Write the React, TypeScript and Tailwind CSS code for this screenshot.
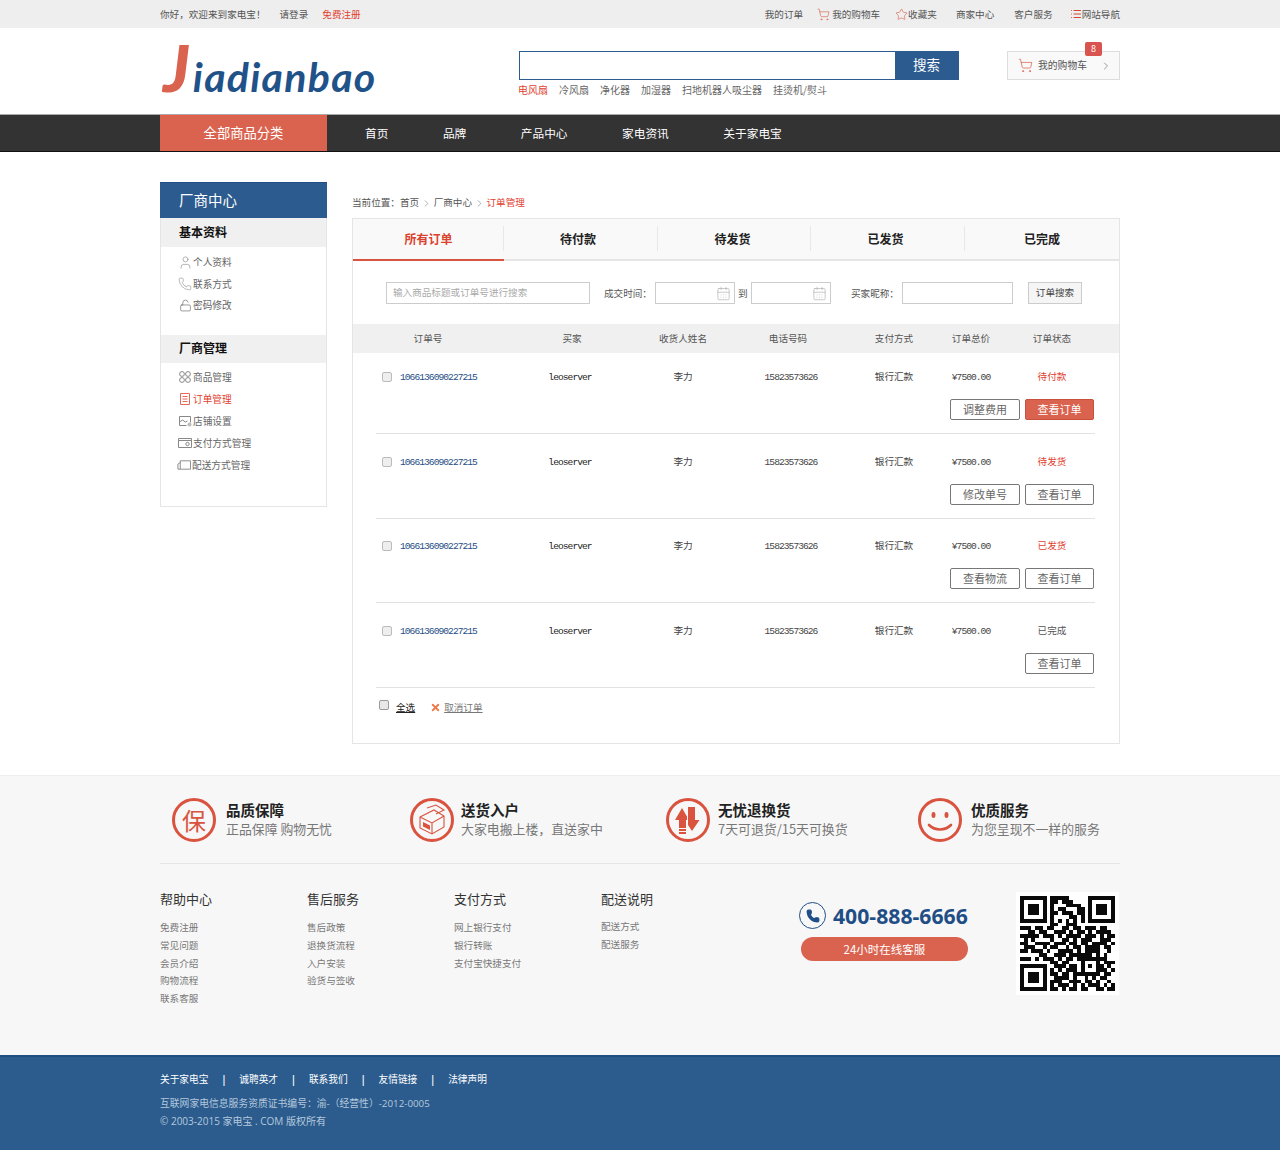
import { CalendarDays, ChevronRight, List, LockOpen, Phone, ShoppingCart, Star, User, X } from 'lucide-react';
import type { ReactNode } from 'react';

const qrRows = [
  '1111111011111000001111111',
  '1000001011011100001000001',
  '1011101010001111001011101',
  '1011101010110001101011101',
  '1011101011011101101011101',
  '1000001010000110101000001',
  '1111111010101010101111111',
  '0000000011001110000000000',
  '1110110110011011011101100',
  '0011011001110101101011110',
  '1111101110101111011101011',
  '0101000010011010111001110',
  '1100111101110110110111101',
  '0111001011001011011110110',
  '1101110100111101011110010',
  '0000011001110111111010100',
  '1110101110101101111111100',
  '0000000011011000100010111',
  '1111111001110110101011010',
  '1000001010101110100011101',
  '1011101011011011111110110',
  '1011101001111010010101100',
  '1011101011100111011010010',
  '1000001010111010101110101',
  '1111111011010110110011011',
];

const QrCode = () => (
  <div className="h-[103px] w-[103px] bg-white p-[4px]">
    <svg viewBox="0 0 25 25" width="95" height="95" shapeRendering="crispEdges">
      {qrRows.map((row, y) =>
        row.split('').map((cell, x) => (cell === '1' ? <rect key={`${x}-${y}`} x={x} y={y} width="1" height="1" fill="#0a0a0a" /> : null)),
      )}
    </svg>
  </div>
);

const TopBar = () => (
  <div className="h-[28px] bg-[#eeeeee] text-[9.6px] leading-[28px] text-[#555]">
    <div className="mx-auto flex w-[960px]">
      <span>你好，欢迎来到家电宝！</span>
      <span className="ml-[14px]">请登录</span>
      <span className="ml-[14px] text-[#e2412f]">免费注册</span>
      <div className="ml-auto flex items-center">
        <span>我的订单</span>
        <ShoppingCart size={13} strokeWidth={1.2} className="ml-[14px] mr-[2px] text-[#d9634f]" />
        <span>我的购物车</span>
        <Star size={13} strokeWidth={1.2} className="ml-[15px] text-[#d9634f]" />
        <span>收藏夹</span>
        <span className="ml-[19px]">商家中心</span>
        <span className="ml-[20px]">客户服务</span>
        <List size={12} strokeWidth={2} className="ml-[17px] text-[#d9432f]" />
        <span>网站导航</span>
      </div>
    </div>
  </div>
);

const hotWords = ['冷风扇', '净化器', '加湿器', '扫地机器人吸尘器', '挂烫机/熨斗'];

const Header = () => (
  <div className="mx-auto flex h-[86px] w-[960px]">
    <div className="flex w-[359px] items-baseline pl-[3px] pt-[7px] font-['Lato',sans-serif] italic leading-none">
      <span className="text-[65px] font-black text-[#d9634f]">J</span>
      <span className="ml-[3px] text-[41px] font-bold tracking-[1.3px] text-[#1f5288]">iadianbao</span>
    </div>
    <div className="w-[440px] pt-[23px]">
      <div className="flex h-[29px] border border-[#2c5c8f]">
        <input className="min-w-0 flex-1 bg-white outline-none" readOnly />
        <button className="w-[63px] bg-[#2c5c8f] pb-[2px] text-[13.5px] text-white">搜索</button>
      </div>
      <div className="mt-[3px] flex gap-[11px] text-[10px] leading-[14px] text-[#666]">
        <span className="-ml-px text-[#e2412f]">电风扇</span>
        {hotWords.map((word) => (
          <span key={word}>{word}</span>
        ))}
      </div>
    </div>
    <div className="relative ml-[48px] mt-[23px] flex h-[29px] w-[113px] items-center border border-[#dddddd] bg-[#f9f9f9] pl-[10px] text-[9.8px] text-[#555]">
      <ShoppingCart size={15} strokeWidth={1.2} className="text-[#d9634f]" />
      <span className="ml-[5px]">我的购物车</span>
      <ChevronRight size={12} strokeWidth={1.2} className="ml-[13px] text-[#555]" />
      <span className="absolute -top-[10px] left-[77px] h-[14px] w-[17px] rounded-[2px] bg-[#d9534f] text-center text-[9px] leading-[14px] text-white">8</span>
    </div>
  </div>
);

const navItems = ['首页', '品牌', '产品中心', '家电资讯', '关于家电宝'];

const Nav = () => (
  <div className="h-[38px] border-t border-b border-t-[#aaaaaa] border-b-[#111] bg-[#333333]">
    <div className="mx-auto flex w-[960px] text-white">
      <div className="h-[36px] w-[167px] border-t border-[#ee5a45] bg-[#d9634f] text-center text-[13.3px] leading-[34px]">全部商品分类</div>
      <div className="ml-[38px] flex gap-[54.5px] text-[11.7px] leading-[35px]">
        {navItems.map((item) => (
          <span key={item}>{item}</span>
        ))}
      </div>
    </div>
  </div>
);

const gray = '#888888';

const FourCircles = () => (
  <svg width="12" height="12" viewBox="0 0 12 12" fill="none" stroke={gray}>
    <circle cx="3" cy="3" r="2.4" />
    <circle cx="9" cy="3" r="2.4" />
    <circle cx="3" cy="9" r="2.4" />
    <circle cx="9" cy="9" r="2.4" />
  </svg>
);

const OrderIcon = () => (
  <svg width="12" height="12" viewBox="0 0 12 12" fill="none" stroke="#e8695a">
    <path d="M1.5 .5h9v11h-9zM3.5 3.5h5M3.5 6h5M3.5 8.5h5" />
  </svg>
);

const ShopIcon = () => (
  <svg width="13" height="12" viewBox="0 0 13 12" fill="none" stroke={gray}>
    <path d="M.5 1.5h11v6M.5 1.5v9h7M.5 7l3-2 3 2 2-1" />
    <circle cx="10.5" cy="9.5" r="2" fill="#bbb" stroke="none" />
  </svg>
);

const PayIcon = () => (
  <svg width="14" height="12" viewBox="0 0 14 12" fill="none" stroke={gray}>
    <path d="M.5 1.5h13v9H.5zM.5 3.5h13" />
    <circle cx="9.5" cy="7" r="1.7" />
  </svg>
);

const ShipIcon = () => (
  <svg width="15" height="12" viewBox="0 0 15 12" fill="none" stroke={gray}>
    <path d="M3.5 1.5h11v9h-11zM3.5 3.5L1 5v5.5h2.5" />
  </svg>
);

const sideIcon = (icon: ReactNode) => <span className="flex h-[14px] w-[14px] shrink-0 items-center justify-center">{icon}</span>;

const SideItem = ({ icon, label, active, className }: { icon: ReactNode; label: string; active?: boolean; className: string }) => (
  <div className={`flex items-center gap-px text-[9.7px] leading-[14px] ${active ? 'text-[#e2412f]' : 'text-[#666]'} ${className}`}>
    {sideIcon(icon)}
    <span>{label}</span>
  </div>
);

const Sidebar = () => (
  <aside className="h-[325px] w-[167px] shrink-0 border-x border-b border-[#e5e5e5] bg-white">
    <div className="-mx-px h-[36px] border-t border-[#1f4e86] bg-[#2c5c8f] pl-[19px] text-[14.5px] leading-[33px] text-white">厂商中心</div>
    <div className="h-[29px] bg-[#f0f0f0] pl-[18px] text-[12px] font-bold leading-[28px] text-[#111]">基本资料</div>
    <SideItem className="ml-[17px] mt-[8px]" label="个人资料" icon={<User size={15} strokeWidth={1} color={gray} className="shrink-0" />} />
    <SideItem className="ml-[17px] mt-[8px]" label="联系方式" icon={<Phone size={14} strokeWidth={1} color={gray} className="shrink-0" />} />
    <SideItem className="ml-[17px] mt-[7px]" label="密码修改" icon={<LockOpen size={13} strokeWidth={1.2} color="#666" className="shrink-0" />} />
    <div className="mt-[23px] h-[28px] bg-[#f0f0f0] pl-[18px] text-[12px] font-bold leading-[26px] text-[#111]">厂商管理</div>
    <SideItem className="ml-[17px] mt-[7px]" label="商品管理" icon={<FourCircles />} />
    <SideItem className="ml-[17px] mt-[8px]" label="订单管理" icon={<OrderIcon />} active />
    <SideItem className="ml-[17px] mt-[8px]" label="店铺设置" icon={<ShopIcon />} />
    <SideItem className="ml-[17px] mt-[8px]" label="支付方式管理" icon={<PayIcon />} />
    <SideItem className="ml-[16px] mt-[8px]" label="配送方式管理" icon={<ShipIcon />} />
  </aside>
);

const tabs = [
  { label: '所有订单', width: 'w-[151px]', nudge: '' },
  { label: '待付款', width: 'w-[154px]', nudge: 'pr-[6px]' },
  { label: '待发货', width: 'w-[153px]', nudge: 'pr-[4px]' },
  { label: '已发货', width: 'w-[154px]', nudge: 'pr-[5px]' },
  { label: '已完成', width: 'w-[154px]', nudge: '' },
];

const Tabs = () => (
  <div className="flex h-[42px] border-b-2 border-[#e5e5e5] bg-[#f9f9f9] text-[12px] font-bold text-[#222]">
    {tabs.map((tab, index) => (
      <div key={tab.label} className={`relative flex items-center justify-center ${tab.width} ${tab.nudge} ${index === 0 ? 'text-[#d9432f]' : ''}`}>
        {tab.label}
        {index === 0 && <span className="absolute -bottom-[2px] left-0 h-[2px] w-full bg-[#d9543f]" />}
        {index < 4 && <span className="absolute right-0 top-[7px] h-[25px] w-px bg-[#e8e8e8]" />}
      </div>
    ))}
  </div>
);

const DateInput = () => (
  <div className="flex h-[22px] w-[80px] items-center justify-end border border-[#cccccc] pr-[3px]">
    <CalendarDays size={15} strokeWidth={1} color="#aaa" />
  </div>
);

const Filters = () => (
  <div className="flex h-[63px] items-center pl-[33px] pt-[1px] text-[9.6px] text-[#555]">
    <input
      readOnly
      placeholder="输入商品标题或订单号进行搜索"
      className="h-[22px] w-[204px] border border-[#cccccc] px-[6px] pb-[2px] placeholder:text-[#aaa]"
    />
    <span className="ml-[14px] mr-[5px] w-[46px] whitespace-nowrap">成交时间：</span>
    <DateInput />
    <span className="mx-[3px] w-[10px]">到</span>
    <DateInput />
    <span className="ml-[20px] mr-[5px] w-[46px] whitespace-nowrap">买家昵称：</span>
    <input readOnly className="h-[22px] w-[111px] border border-[#cccccc]" />
    <button className="ml-[15px] h-[22px] w-[54px] border border-[#cccccc] bg-[#f5f5f5] pb-[1px] text-[9.6px] text-[#444]">订单搜索</button>
  </div>
);

const headers = ['订单号', '买家', '收货人姓名', '电话号码', '支付方式', '订单总价', '订单状态'];

const TableHeader = () => (
  <div className="grid h-[29px] grid-cols-[150px_138px_84px_126px_86px_68px_94px] bg-[#f0f0f0] text-center text-[9.6px] leading-[29px] text-[#555]">
    {headers.map((title) => (
      <span key={title}>{title}</span>
    ))}
  </div>
);

const orders = [
  { pad: 'pt-[16px]', status: '待付款', statusClass: 'text-[#e2412f]', extra: '调整费用', primary: true },
  { pad: 'pt-[20px]', status: '待发货', statusClass: 'text-[#e2412f]', extra: '修改单号', primary: false },
  { pad: 'pt-[19px]', status: '已发货', statusClass: 'text-[#e2412f]', extra: '查看物流', primary: false },
  { pad: 'pt-[20px]', status: '已完成', statusClass: 'text-[#555]', extra: '', primary: false },
];

const mono = "translate-y-px font-['Liberation_Mono',monospace] text-[9.6px] tracking-[-0.95px]";

const OrderButton = ({ label, primary, width }: { label: string; primary?: boolean; width: string }) => (
  <button
    className={`h-[21px] rounded-[2px] border text-[11px] leading-none ${width} ${
      primary ? 'border-[#c9503d] bg-[#d9634f] text-white' : 'border-[#777] bg-white text-[#666]'
    }`}
  >
    {label}
  </button>
);

const OrderRow = ({ order }: { order: (typeof orders)[number] }) => (
  <div className={`ml-[23px] mr-[24px] border-b border-[#e2e2e2] pb-[13px] ${order.pad}`}>
    <div className="grid h-[16px] grid-cols-[127px_138px_84px_126px_86px_68px_90px] items-center text-center text-[9.6px] text-[#444]">
      <div className="flex items-center pl-[6px] text-left">
        <input type="checkbox" className="h-[10px] w-[10px] appearance-none rounded-[2px] border border-[#bbb] bg-[#eee]" />
        <span className={`ml-[8px] text-[#1f4e86] ${mono}`}>1066136090227215</span>
      </div>
      <span className={`-ml-[4px] text-[#222] ${mono}`}>leoserver</span>
      <span className="-translate-y-px">李力</span>
      <span className={`pl-[6px] ${mono}`}>15823573626</span>
      <span className="-translate-y-px">银行汇款</span>
      <span className={mono}>¥7500.00</span>
      <span className={`-translate-y-px pl-[4px] ${order.statusClass}`}>{order.status}</span>
    </div>
    <div className="mt-[14px] flex justify-end gap-[5px] pr-[1px]">
      {order.extra && <OrderButton label={order.extra} width="w-[70px]" />}
      <OrderButton label="查看订单" primary={order.primary} width="w-[69px]" />
    </div>
  </div>
);

const Crumb = () => (
  <span className="inline-flex w-[14.5px] justify-center align-middle">
    <ChevronRight size={11} strokeWidth={1} color="#555" />
  </span>
);

const Main = () => (
  <main className="flex-1">
    <div className="h-[36px] pt-[12px] text-[9.6px] leading-[16px] text-[#555]">
      当前位置：首页
      <Crumb />
      厂商中心
      <Crumb />
      <span className="text-[#e2412f]">订单管理</span>
    </div>
    <div className="h-[526px] border border-[#e5e5e5] bg-white">
      <Tabs />
      <Filters />
      <TableHeader />
      {orders.map((order) => (
        <OrderRow key={order.status} order={order} />
      ))}
      <div className="flex items-center pl-[26px] pt-[12px] text-[9.6px]">
        <input type="checkbox" className="-mt-[4px] h-[10px] w-[10px] appearance-none rounded-[2px] border border-[#999] bg-[#e8e8e8]" />
        <span className="ml-[7px] text-[#222] underline">全选</span>
        <X size={11} strokeWidth={4} className="ml-[15px] text-[#ee7a4a]" />
        <span className="ml-[3px] text-[#777] underline">取消订单</span>
      </div>
    </div>
  </main>
);

const red = '#d9533f';

const BoxIcon = () => (
  <svg width="44" height="44" viewBox="0 0 44 44" fill="none" stroke={red}>
    <circle cx="22" cy="22" r="20.5" strokeWidth="3" />
    <path d="M10 19l14-7 10 6v11l-12 7-12-6zM10 19l12 6 12-7M22 25v11M17 10l9-3 8 5-8 4" strokeWidth="1.1" />
    <path d="M13 24l7 3.5v4.5l-7-3.5z" fill={red} stroke="none" />
  </svg>
);

const ArrowsIcon = () => (
  <svg width="44" height="44" viewBox="0 0 44 44" fill="none">
    <circle cx="22" cy="22" r="20.5" stroke={red} strokeWidth="3" />
    <path d="M16 10L9 22h4v14h7V22h3z" fill={red} />
    <path d="M22 9h7v13h4.5L26 33l-4-6z" fill={red} />
    <path d="M13 30.5h7M13 33.5h7" stroke="#f7f7f7" />
    <path d="M21.5 10v16" stroke="#f7f7f7" />
  </svg>
);

const SmileIcon = () => (
  <svg width="44" height="44" viewBox="0 0 44 44" fill="none" stroke={red}>
    <circle cx="22" cy="22" r="20.5" strokeWidth="3" />
    <ellipse cx="15.5" cy="17" rx="2" ry="3" fill={red} stroke="none" />
    <ellipse cx="28.5" cy="17" rx="2" ry="3" fill={red} stroke="none" />
    <path d="M11 27c6 6 16 6 22 0" strokeWidth="2.6" strokeLinecap="round" />
  </svg>
);

const BaoIcon = () => (
  <div className="flex h-[44px] w-[44px] items-center justify-center rounded-full border-[3px] border-[#d9533f] text-[24px] leading-none text-[#d9533f]">保</div>
);

const features = [
  { icon: <BaoIcon />, title: '品质保障', text: '正品保障 购物无忧', wrap: 'w-[238px]', gap: 'ml-[10px]' },
  { icon: <BoxIcon />, title: '送货入户', text: '大家电搬上楼，直送家中', wrap: 'w-[256px]', gap: 'ml-[7px]' },
  { icon: <ArrowsIcon />, title: '无忧退换货', text: '7天可退货/15天可换货', wrap: 'w-[252px]', gap: 'ml-[8px]' },
  { icon: <SmileIcon />, title: '优质服务', text: '为您呈现不一样的服务', wrap: 'w-[202px]', gap: 'ml-[9px]' },
];

const linkColumns = [
  { title: '帮助中心', links: ['免费注册', '常见问题', '会员介绍', '购物流程', '联系客服'], gap: 'mt-[10px]' },
  { title: '售后服务', links: ['售后政策', '退换货流程', '入户安装', '验货与签收'], gap: 'mt-[10px]' },
  { title: '支付方式', links: ['网上银行支付', '银行转账', '支付宝快捷支付'], gap: 'mt-[10px]' },
  { title: '配送说明', links: ['配送方式', '配送服务'], gap: 'mt-[9px]' },
];

const bottomLinks = ['关于家电宝', '诚聘英才', '联系我们', '友情链接', '法律声明'];

const Footer = () => (
  <footer>
    <div className="h-[280px] border-t border-[#eeeeee] bg-[#f7f7f7]">
      <div className="mx-auto w-[960px]">
        <div className="flex h-[88px] items-center border-b border-[#e5e5e5] pl-[12px]">
          {features.map((feature) => (
            <div key={feature.title} className={`flex items-center ${feature.wrap}`}>
              {feature.icon}
              <div className={`-mt-[2px] ${feature.gap}`}>
                <div className="text-[14.5px] font-bold leading-[20px] text-[#222]">{feature.title}</div>
                <div className="text-[12.9px] leading-[18px] text-[#777]">{feature.text}</div>
              </div>
            </div>
          ))}
        </div>
        <div className="flex">
          {linkColumns.map((column) => (
            <div key={column.title} className="w-[147px] pt-[25px]">
              <div className="text-[13px] leading-[20px] text-[#333]">{column.title}</div>
              <div className={`${column.gap} text-[9.6px] leading-[17.8px] text-[#777]`}>
                {column.links.map((link) => (
                  <div key={link}>{link}</div>
                ))}
              </div>
            </div>
          ))}
          <div className="ml-[51px] w-[169px] pt-[38px]">
            <div className="flex items-center">
              <span className="flex h-[27px] w-[27px] shrink-0 items-center justify-center rounded-full border border-[#1f4e86]">
                <Phone size={14} fill="#1f4e86" color="#1f4e86" />
              </span>
              <span className="ml-[7px] whitespace-nowrap font-['Open_Sans',sans-serif] text-[21.2px] font-bold leading-[27px] text-[#1f4e86]">400-888-6666</span>
            </div>
            <div className="ml-[2px] mt-[8px] h-[24px] w-[167px] rounded-full bg-[#d9634f] text-center text-[11.5px] leading-[24px] text-white">24小时在线客服</div>
          </div>
          <div className="ml-[48px] pt-[28px]">
            <QrCode />
          </div>
        </div>
      </div>
    </div>
    <div className="h-[95px] border-t-2 border-[#1f4e80] bg-[#2c5c8d]">
      <div className="mx-auto w-[960px] pt-[15px]">
        <div className="flex text-[9.7px] leading-[14px] text-white">
          {bottomLinks.map((link, index) => (
            <span key={link} className="flex">
              {link}
              {index < bottomLinks.length - 1 && <span className="mx-[14px] font-bold">|</span>}
            </span>
          ))}
        </div>
        <div className="mt-[9px] font-['Open_Sans','Noto_Sans_CJK_SC',sans-serif] text-[9.8px] leading-[18px] text-[#b4c8dc]">互联网家电信息服务资质证书编号：渝-（经营性）-2012-0005</div>
        <div className="-mt-[1px] font-['Open_Sans','Noto_Sans_CJK_SC',sans-serif] text-[10px] leading-[18px] text-[#b4c8dc]">© 2003-2015 家电宝 . COM 版权所有</div>
      </div>
    </div>
  </footer>
);

export default function App() {
  return (
    <div className="bg-white font-['Noto_Sans_CJK_SC','Noto_Sans',sans-serif]">
      <TopBar />
      <Header />
      <Nav />
      <div className="mx-auto flex w-[960px] gap-[25px] pb-[31px] pt-[30px]">
        <Sidebar />
        <Main />
      </div>
      <Footer />
    </div>
  );
}
